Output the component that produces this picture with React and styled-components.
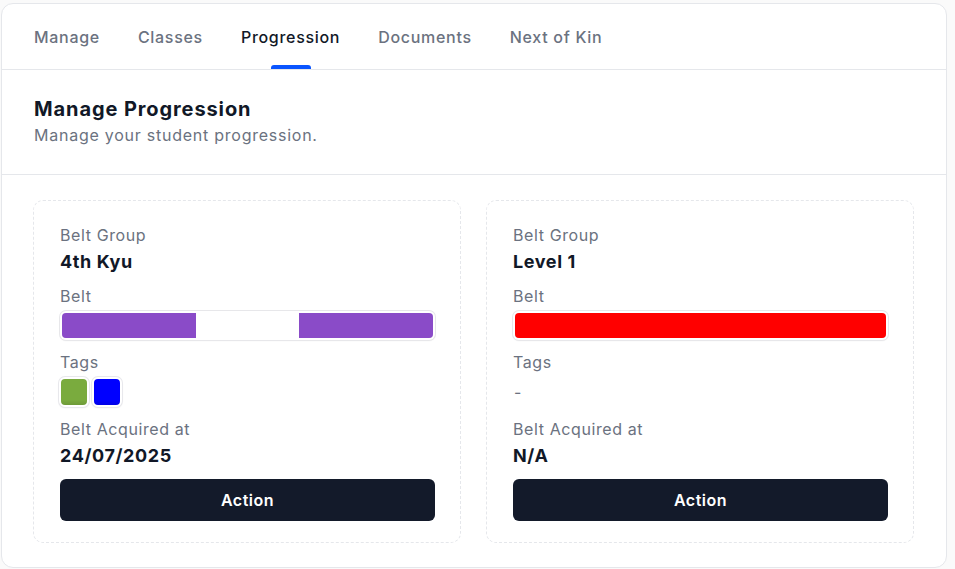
import React from "react";
import styled, { createGlobalStyle } from "styled-components";

const GlobalStyle = createGlobalStyle`
	* {
		box-sizing: border-box;
	}
	body {
		margin: 0;
		background: #fafafa;
		font-family: Inter, "Noto Sans", "Liberation Sans", sans-serif;
		color: #111827;
	}
`;

const Page = styled.div`
	padding: 3px 8px 2px 1px;
`;

const Panel = styled.section`
	width: 946px;
	background: #ffffff;
	border: 1px solid #e5e7eb;
	border-radius: 12px;
	overflow: hidden;
`;

const Tabs = styled.nav`
	display: flex;
	gap: 38px;
	height: 66px;
	padding: 0 32px;
	border-bottom: 1px solid #e5e7eb;
`;

const Tab = styled.button`
	position: relative;
	border: 0;
	background: none;
	padding: 0;
	height: 65px;
	font-family: inherit;
	font-size: 16px;
	font-weight: 500;
	line-height: 24px;
	letter-spacing: 0.7px;
	color: ${(p) => (p.$active ? "#111827" : "#6b7280")};
	cursor: pointer;

	&::after {
		content: "";
		display: ${(p) => (p.$active ? "block" : "none")};
		position: absolute;
		left: 50%;
		bottom: 0;
		width: 40px;
		height: 4px;
		margin-left: -20px;
		border-radius: 3px 3px 0 0;
		background: #0a55ff;
	}
`;

const Header = styled.header`
	padding: 25px 32px 27px;
	border-bottom: 1px solid #e5e7eb;

	h2 {
		margin: 0;
		font-size: 20px;
		line-height: 28px;
		font-weight: 700;
		letter-spacing: 0.9px;
		color: #111827;
	}

	p {
		margin: 0;
		font-size: 16px;
		line-height: 24px;
		color: #6b7280;
		letter-spacing: 0.75px;
	}
`;

const Grid = styled.div`
	display: grid;
	grid-template-columns: 1fr 1fr;
	gap: 25px;
	padding: 25px 32px 24px 31px;
`;

const Card = styled.article`
	display: flex;
	flex-direction: column;
	gap: 10px;
	padding: 22px 25px 21px 26px;
	border: 1px dashed #e5e7eb;
	border-radius: 10px;
`;

const Field = styled.div`
	display: flex;
	flex-direction: column;
	gap: 3px;
`;

const Label = styled.span`
	font-size: 16px;
	line-height: 24px;
	letter-spacing: 0.6px;
	color: #6b7280;
`;

const Value = styled.span`
	font-size: 18px;
	line-height: 24px;
	font-weight: 700;
	letter-spacing: 0.6px;
	color: #111827;
`;

const Dash = styled.span`
	height: 30px;
	font-size: 16px;
	line-height: 30px;
	color: #6b7280;
	padding-left: 1px;
`;

const Belt = styled.div`
	display: flex;
	height: 29px;
	padding: 2px;
	border-radius: 6px;
	background: #ffffff;
	box-shadow: 0 0 0 1px #e7e7ea, 0 1px 2px rgba(0, 0, 0, 0.06);
	overflow: hidden;
`;

const BeltInner = styled.div`
	display: flex;
	flex: 1;
	border-radius: 4px;
	overflow: hidden;
	box-shadow: inset 0 -2px 2px rgba(0, 0, 0, 0.14);
`;

const Stripe = styled.div`
	flex: ${(p) => p.$size};
	background: ${(p) => p.$color};
`;

const TagRow = styled.div`
	display: flex;
	gap: 3px;
	height: 30px;
	margin-left: -1px;
`;

const Tag = styled.span`
	width: 30px;
	height: 30px;
	border-radius: 6px;
	border: 2px solid #ffffff;
	box-shadow: 0 0 0 1px #e8e8ec, 0 1px 2px rgba(0, 0, 0, 0.08);
	background-image: linear-gradient(
		to bottom,
		rgba(0, 0, 0, 0) 80%,
		rgba(0, 0, 0, 0.1)
	);
	background-color: ${(p) => p.$color};
`;

const ActionButton = styled.button`
	margin-top: 1px;
	height: 42px;
	border: 0;
	border-radius: 6px;
	background: #131a2a;
	color: #ffffff;
	font-family: inherit;
	font-size: 16px;
	font-weight: 600;
	letter-spacing: 0.5px;
	cursor: pointer;
`;

const tabs = ["Manage", "Classes", "Progression", "Documents", "Next of Kin"];

const students = [
	{
		group: "4th Kyu",
		belt: [
			{ color: "#8a4bc8", size: 135 },
			{ color: "#ffffff", size: 104 },
			{ color: "#8a4bc8", size: 135 },
		],
		tags: ["#7aab3e", "#0000ff"],
		acquired: "24/07/2025",
	},
	{
		group: "Level 1",
		belt: [{ color: "#ff0000", size: 1 }],
		tags: [],
		acquired: "N/A",
	},
];

const ProgressionCard = ({ data }) => (
	<Card>
		<Field>
			<Label>Belt Group</Label>
			<Value>{data.group}</Value>
		</Field>
		<Field>
			<Label>Belt</Label>
			<Belt>
				<BeltInner>
					{data.belt.map((s, i) => (
						<Stripe key={i} $color={s.color} $size={s.size} />
					))}
				</BeltInner>
			</Belt>
		</Field>
		<Field>
			<Label>Tags</Label>
			{data.tags.length ? (
				<TagRow>
					{data.tags.map((c) => (
						<Tag key={c} $color={c} />
					))}
				</TagRow>
			) : (
				<Dash>-</Dash>
			)}
		</Field>
		<Field>
			<Label>Belt Acquired at</Label>
			<Value>{data.acquired}</Value>
		</Field>
		<ActionButton>Action</ActionButton>
	</Card>
);

const App = () => {
	return (
		<Page>
			<GlobalStyle />
			<Panel>
				<Tabs>
					{tabs.map((t) => (
						<Tab key={t} $active={t === "Progression"}>
							{t}
						</Tab>
					))}
				</Tabs>
				<Header>
					<h2>Manage Progression</h2>
					<p>Manage your student progression.</p>
				</Header>
				<Grid>
					{students.map((s) => (
						<ProgressionCard key={s.group} data={s} />
					))}
				</Grid>
			</Panel>
		</Page>
	);
};

export default App;
